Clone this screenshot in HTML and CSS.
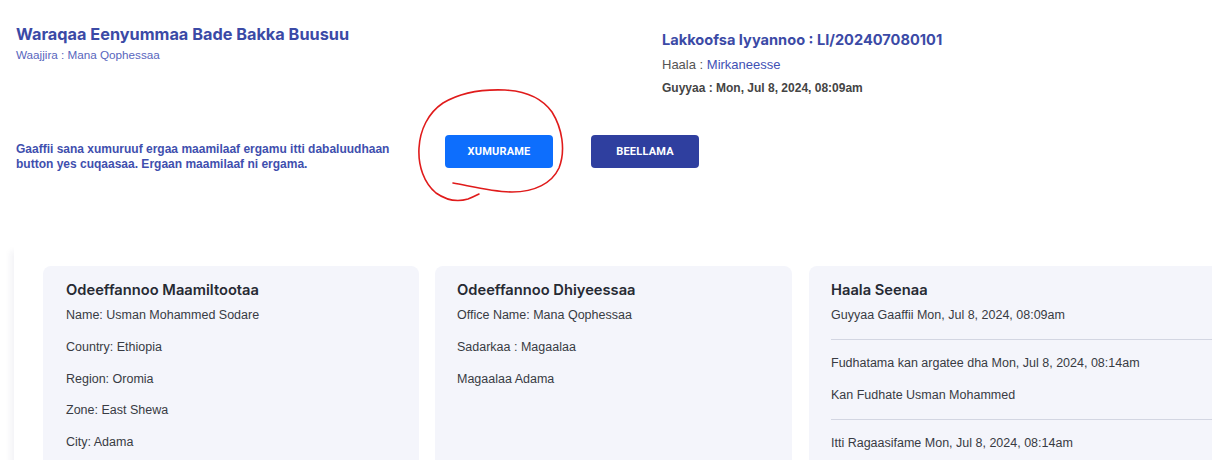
FILE: index.html
```html
<!DOCTYPE html>
<html>
<head>
<meta charset="utf-8">
<link rel="stylesheet" href="styles.css">
</head>
<body>
<div class="page">
  <header class="header">
    <div class="head-left">
      <h1 class="title">Waraqaa Eenyummaa Bade Bakka Buusuu</h1>
      <div class="subtitle">Waajjira : Mana Qophessaa</div>
    </div>
    <div class="head-right">
      <h2 class="ref">Lakkoofsa Iyyannoo : LI/202407080101</h2>
      <div class="status">Haala : <span class="status-val">Mirkaneesse</span></div>
      <div class="date">Guyyaa : Mon, Jul 8, 2024, 08:09am</div>
    </div>
  </header>

  <section class="actions">
    <p class="note">Gaaffii sana xumuruuf ergaa maamilaaf ergamu itti dabaluudhaan button yes cuqaasaa. Ergaan maamilaaf ni ergama.</p>
    <button class="btn btn-primary">XUMURAME</button>
    <button class="btn btn-dark">BEELLAMA</button>
  </section>

  <section class="panel">
    <div class="card card-1">
      <h3 class="card-title">Odeeffannoo Maamiltootaa</h3>
      <p class="line">Name: Usman Mohammed Sodare</p>
      <p class="line">Country: Ethiopia</p>
      <p class="line">Region: Oromia</p>
      <p class="line">Zone: East Shewa</p>
      <p class="line">City: Adama</p>
    </div>
    <div class="card card-2">
      <h3 class="card-title">Odeeffannoo Dhiyeessaa</h3>
      <p class="line">Office Name: Mana Qophessaa</p>
      <p class="line">Sadarkaa : Magaalaa</p>
      <p class="line">Magaalaa Adama</p>
    </div>
    <div class="card card-3">
      <h3 class="card-title">Haala Seenaa</h3>
      <p class="line">Guyyaa Gaaffii Mon, Jul 8, 2024, 08:09am</p>
      <hr class="divider">
      <p class="line">Fudhatama kan argatee dha Mon, Jul 8, 2024, 08:14am</p>
      <p class="line">Kan Fudhate Usman Mohammed</p>
      <hr class="divider">
      <p class="line">Itti Ragaasifame Mon, Jul 8, 2024, 08:14am</p>
    </div>
  </section>

  <svg class="annotation" width="1212" height="460" viewBox="0 0 1212 460">
    <path d="M453 183 C470 186 492 192 512 192 C535 192 552 183 559 168 C566 150 562 128 552 112 C542 98 525 91 505 90 C480 89 458 94 443 103 C428 113 420 130 419 148 C418 166 424 183 436 193 C446 200 458 202 468 199 C473 197 477 195 479 194" fill="none" stroke="#e01b1b" stroke-width="1.6" stroke-linecap="round"/>
  </svg>
</div>
</body>
</html>
```

FILE: styles.css
```css
html, body {
  margin: 0;
  padding: 0;
  background: #ffffff;
  overflow: hidden;
}

.page {
  position: relative;
  width: 1212px;
  height: 460px;
  font-family: "Liberation Sans", Arial, sans-serif;
}

.header {
  display: flex;
  align-items: flex-start;
  padding: 24px 0 0 16px;
}

.head-left {
  width: 646px;
}

.title {
  margin: 0;
  font-family: Inter, "Liberation Sans", sans-serif;
  font-size: 16.3px;
  line-height: 20px;
  font-weight: 700;
  color: #3b4aa6;
}

.subtitle {
  margin-top: 4px;
  font-size: 11.7px;
  line-height: 14px;
  color: #5866bd;
}

.head-right {
  padding-top: 6px;
}

.ref {
  margin: 0;
  font-family: Inter, "Liberation Sans", sans-serif;
  font-size: 14.6px;
  line-height: 20px;
  font-weight: 700;
  color: #3b4aa6;
}

.status {
  margin-top: 6px;
  font-size: 13px;
  line-height: 18px;
  color: #555;
}

.status-val {
  color: #3f51b5;
}

.date {
  margin-top: 6px;
  font-size: 12px;
  line-height: 16px;
  font-weight: bold;
  color: #444;
}

.actions {
  display: flex;
  align-items: flex-start;
  margin-top: 39px;
  padding-left: 16px;
}

.note {
  width: 385px;
  margin: 7px 44px 0 0;
  font-size: 12px;
  line-height: 15px;
  font-weight: bold;
  color: #3f4fae;
}

.btn {
  width: 108px;
  height: 33px;
  border: none;
  border-radius: 4px;
  color: #fff;
  font-family: Roboto, "Liberation Sans", sans-serif;
  font-size: 11px;
  font-weight: bold;
  letter-spacing: 0.2px;
  padding: 0;
}

.btn-primary {
  background: #0d6efd;
  margin-right: 38px;
}

.btn-dark {
  background: #2f3f9f;
}

.panel {
  display: flex;
  gap: 16px;
  margin-top: 73px;
  margin-left: 14px;
  padding: 21px 0 0 29px;
  height: 300px;
  box-shadow: -4px 6px 6px rgba(30, 40, 90, 0.05);
}

.card {
  flex: 0 0 auto;
  background: #f4f5fb;
  border-radius: 8px;
  padding: 14px 22px 0 22px;
  box-sizing: border-box;
}

.card-1 { width: 376px; padding-left: 23px; }
.card-2 { width: 357px; }
.card-3 { width: 430px; margin-left: 1px; }

.card-title {
  margin: 0 0 7px 0;
  font-family: Inter, "Liberation Sans", sans-serif;
  font-size: 14.7px;
  line-height: 20px;
  font-weight: 600;
  color: #262a33;
}

.line {
  margin: 0 0 15.8px 0;
  font-size: 12.5px;
  line-height: 16px;
  color: #383b43;
}

.divider {
  border: none;
  border-top: 1px solid #d3d6e2;
  margin: 0 -22px 15px 0;
}

.card-3 .line:first-of-type { margin-bottom: 16px; }

.annotation {
  position: absolute;
  left: 0;
  top: 0;
  pointer-events: none;
}
```
